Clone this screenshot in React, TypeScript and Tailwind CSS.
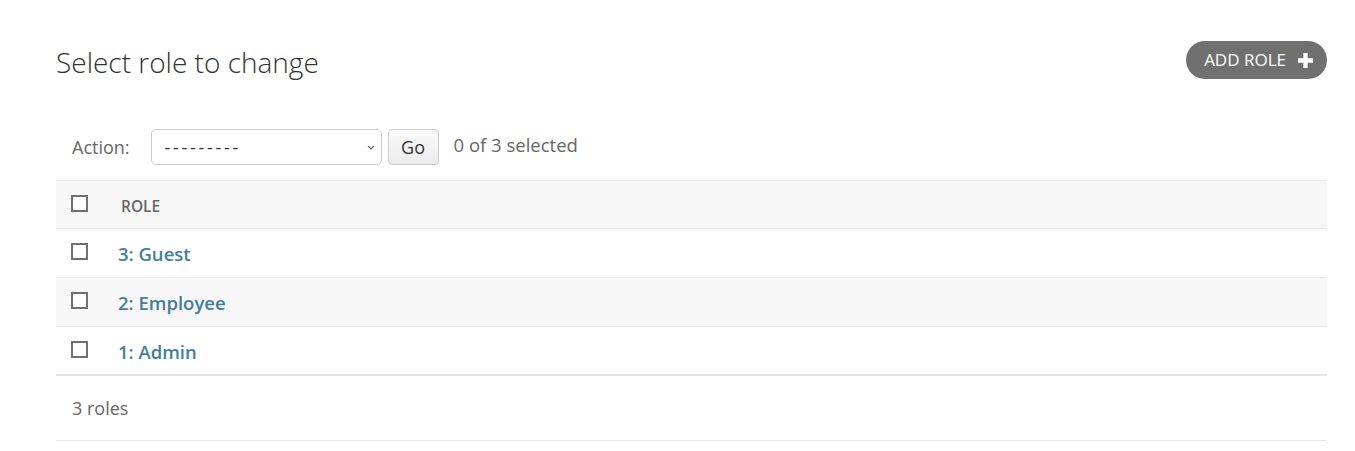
import React from "react";

const font = { fontFamily: '"Open Sans", "Noto Sans", sans-serif' };

function Box() {
  return <span className="inline-block w-[17px] h-[17px] border-2 border-[#707070] bg-white box-border" />;
}

export default function App() {
  const rows = ["3: Guest", "2: Employee", "1: Admin"];
  return (
    <div className="w-[1355px] h-[451px] bg-white pl-[56px] pr-[28px] pt-[41px] text-[#333]" style={font}>
      <div className="flex items-center justify-between h-[38px]">
        <h1 className="text-[28px] font-light text-[#333] leading-none mt-[4px]">Select role to change</h1>
        <button className="h-[38px] pl-[18px] pr-[14px] rounded-full bg-[#707070] text-white text-[17px] flex items-center gap-[12px]">
          <span>ADD ROLE</span>
          <svg width="15" height="15" viewBox="0 0 14 14"><path d="M5 0h4v5h5v4H9v5H5V9H0V5h5z" fill="white" /></svg>
        </button>
      </div>
      <div className="flex items-center h-[36px] mt-[50px] pl-[16px] text-[18px] text-[#666]">
        <span className="mr-[21px]">Action:</span>
        <div className="relative w-[231px] h-[36px] border border-[#ccc] rounded-[5px] flex items-center pl-[13px] text-[#333] text-[18px]">
          <span className="tracking-[2.7px] font-medium">---------</span>
          <svg className="absolute right-[6px] top-[15px]" width="8" height="6" viewBox="0 0 8 6"><path d="M1 1l3 3 3-3" stroke="#666" strokeWidth="1.2" fill="none" /></svg>
        </div>
        <button className="ml-[6px] w-[51px] h-[36px] border border-[#ccc] rounded-[4px] bg-gradient-to-b from-[#fafafa] to-[#ebebeb] text-[#333] text-[18px]">Go</button>
        <span className="ml-[15px] -mt-[4px] text-[18.5px]">0 of 3 selected</span>
      </div>
      <div className="mt-[15px]">
        <div className="flex h-[49px] bg-[#f7f7f7] border-y border-[#e8e8e8] items-start">
          <div className="w-[65px] pl-[15px] pt-[13px]"><Box /></div>
          <span className="pt-[14px] text-[15.5px] font-semibold text-[#666]">ROLE</span>
        </div>
        {rows.map((r, i) => (
          <div key={r} className={`flex h-[49px] items-start ${i === 2 ? "border-b-[2px] border-[#e4e4e4]" : "border-b border-[#e8e8e8]"} ${i === 1 ? "bg-[#f7f7f7]" : "bg-white"}`}>
            <div className="w-[62px] pl-[15px] pt-[13px]"><Box /></div>
            <a className="pt-[11px] text-[18.5px] font-semibold text-[#447e9b]">{r}</a>
          </div>
        ))}
        <div className="h-[65px] border-b border-[#e8e8e8] flex items-center pl-[16px] text-[18px] text-[#666]">3 roles</div>
      </div>
    </div>
  );
}
